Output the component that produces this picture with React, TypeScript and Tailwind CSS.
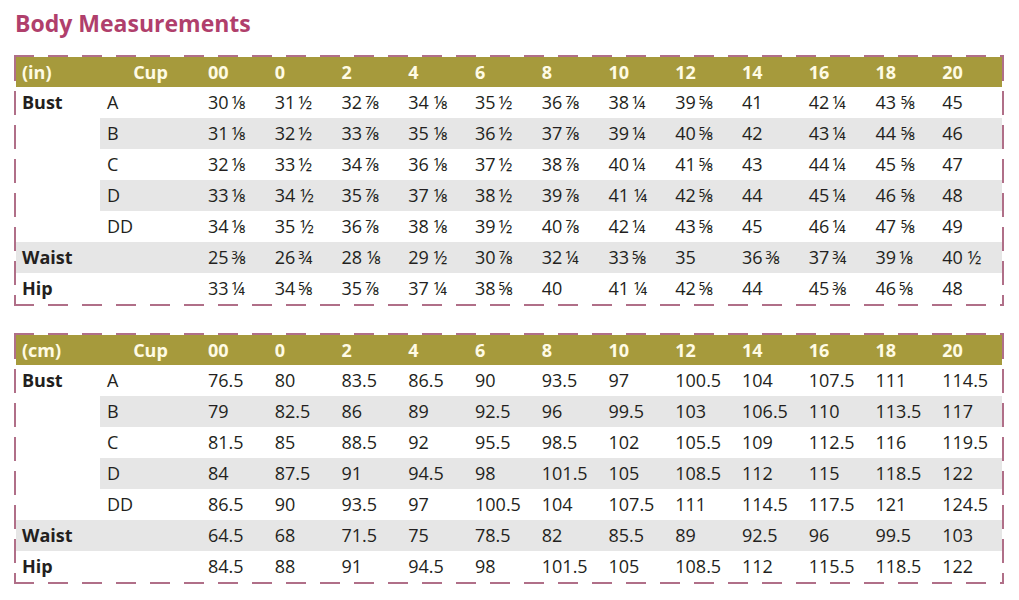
import React from "react";

type Row = { label: string; cup: string; vals: string[]; shade: "none" | "partial" | "full" };

const inchRows: Row[] = [
  { label: "Bust", cup: "A", shade: "none", vals: ["30⅛", "31½", "32⅞", "34 ⅛", "35½", "36⅞", "38¼", "39⅝", "41", "42¼", "43 ⅝", "45"] },
  { label: "", cup: "B", shade: "partial", vals: ["31⅛", "32½", "33⅞", "35 ⅛", "36½", "37⅞", "39¼", "40⅝", "42", "43¼", "44 ⅝", "46"] },
  { label: "", cup: "C", shade: "none", vals: ["32⅛", "33½", "34⅞", "36 ⅛", "37½", "38⅞", "40¼", "41⅝", "43", "44¼", "45 ⅝", "47"] },
  { label: "", cup: "D", shade: "partial", vals: ["33⅛", "34 ½", "35⅞", "37 ⅛", "38½", "39⅞", "41 ¼", "42⅝", "44", "45¼", "46 ⅝", "48"] },
  { label: "", cup: "DD", shade: "none", vals: ["34⅛", "35 ½", "36⅞", "38 ⅛", "39½", "40⅞", "42¼", "43⅝", "45", "46¼", "47 ⅝", "49"] },
  { label: "Waist", cup: "", shade: "full", vals: ["25⅜", "26¾", "28 ⅛", "29 ½", "30⅞", "32¼", "33⅝", "35", "36⅜", "37¾", "39⅛", "40 ½"] },
  { label: "Hip", cup: "", shade: "none", vals: ["33¼", "34⅝", "35⅞", "37 ¼", "38⅝", "40", "41 ¼", "42⅝", "44", "45⅜", "46⅝", "48"] },
];

const cmRows: Row[] = [
  { label: "Bust", cup: "A", shade: "none", vals: ["76.5", "80", "83.5", "86.5", "90", "93.5", "97", "100.5", "104", "107.5", "111", "114.5"] },
  { label: "", cup: "B", shade: "partial", vals: ["79", "82.5", "86", "89", "92.5", "96", "99.5", "103", "106.5", "110", "113.5", "117"] },
  { label: "", cup: "C", shade: "none", vals: ["81.5", "85", "88.5", "92", "95.5", "98.5", "102", "105.5", "109", "112.5", "116", "119.5"] },
  { label: "", cup: "D", shade: "partial", vals: ["84", "87.5", "91", "94.5", "98", "101.5", "105", "108.5", "112", "115", "118.5", "122"] },
  { label: "", cup: "DD", shade: "none", vals: ["86.5", "90", "93.5", "97", "100.5", "104", "107.5", "111", "114.5", "117.5", "121", "124.5"] },
  { label: "Waist", cup: "", shade: "full", vals: ["64.5", "68", "71.5", "75", "78.5", "82", "85.5", "89", "92.5", "96", "99.5", "103"] },
  { label: "Hip", cup: "", shade: "none", vals: ["84.5", "88", "91", "94.5", "98", "101.5", "105", "108.5", "112", "115.5", "118.5", "122"] },
];

const sizes = ["00", "0", "2", "4", "6", "8", "10", "12", "14", "16", "18", "20"];

const GRID = "grid grid-cols-[84px_101px_repeat(12,minmax(0,1fr))]";

const spaced = (v: string) => v.replace(/(\d)([⅛¼⅜½⅝¾⅞])/, "$1\u2009$2");

function HDash() {
  return (
    <div className="h-[2px] w-full bg-[image:repeating-linear-gradient(90deg,#b06f88_0px,#b06f88_20px,transparent_20px,transparent_34px)]" />
  );
}

function VDash() {
  return (
    <div className="w-[2px] shrink-0 bg-[image:repeating-linear-gradient(180deg,#b06f88_0px,#b06f88_24px,transparent_24px,transparent_34px)]" />
  );
}

function Table({ unit, rows }: { unit: string; rows: Row[] }) {
  return (
    <div className="flex w-[990px] flex-col">
      <HDash />
      <div className="flex">
        <VDash />
        <div className="flex-1">
          <div className={`${GRID} h-[30px] items-center bg-[#a69a3c] text-[18px] font-bold text-[#fffbe4]`}>
            <div className="pl-[6px]">{unit}</div>
            <div className="text-center">Cup</div>
            {sizes.map((s) => (
              <div key={s} className="pl-[7px]">
                {s}
              </div>
            ))}
          </div>
          {rows.map((r, i) => {
            const gray = "bg-[#e6e6e6]";
            const rowBg = r.shade === "full" ? gray : "";
            const cellBg = r.shade === "partial" ? gray : "";
            return (
              <div key={i} className={`${GRID} h-[31px] text-[18px] text-[#231f20] ${rowBg}`}>
                <div className="flex items-center pl-[6px] font-bold">{r.label}</div>
                <div className={`flex items-center pl-[7px] ${cellBg}`}>{r.cup}</div>
                {r.vals.map((v, j) => (
                  <div key={j} className={`flex items-center whitespace-pre pl-[7px] ${cellBg}`}>
                    {spaced(v)}
                  </div>
                ))}
              </div>
            );
          })}
        </div>
        <VDash />
      </div>
      <HDash />
    </div>
  );
}

export default function App() {
  return (
    <div className="h-[600px] w-[1019px] overflow-hidden bg-white pl-[14px] pt-[8px] font-['Open_Sans',sans-serif]">
      <h1 className="h-[30px] pl-[1px] text-[23px] font-bold leading-[30px] text-[#b03f6c]">Body Measurements</h1>
      <div className="mt-[17px]">
        <Table unit="(in)" rows={inchRows} />
      </div>
      <div className="mt-[27px]">
        <Table unit="(cm)" rows={cmRows} />
      </div>
    </div>
  );
}
